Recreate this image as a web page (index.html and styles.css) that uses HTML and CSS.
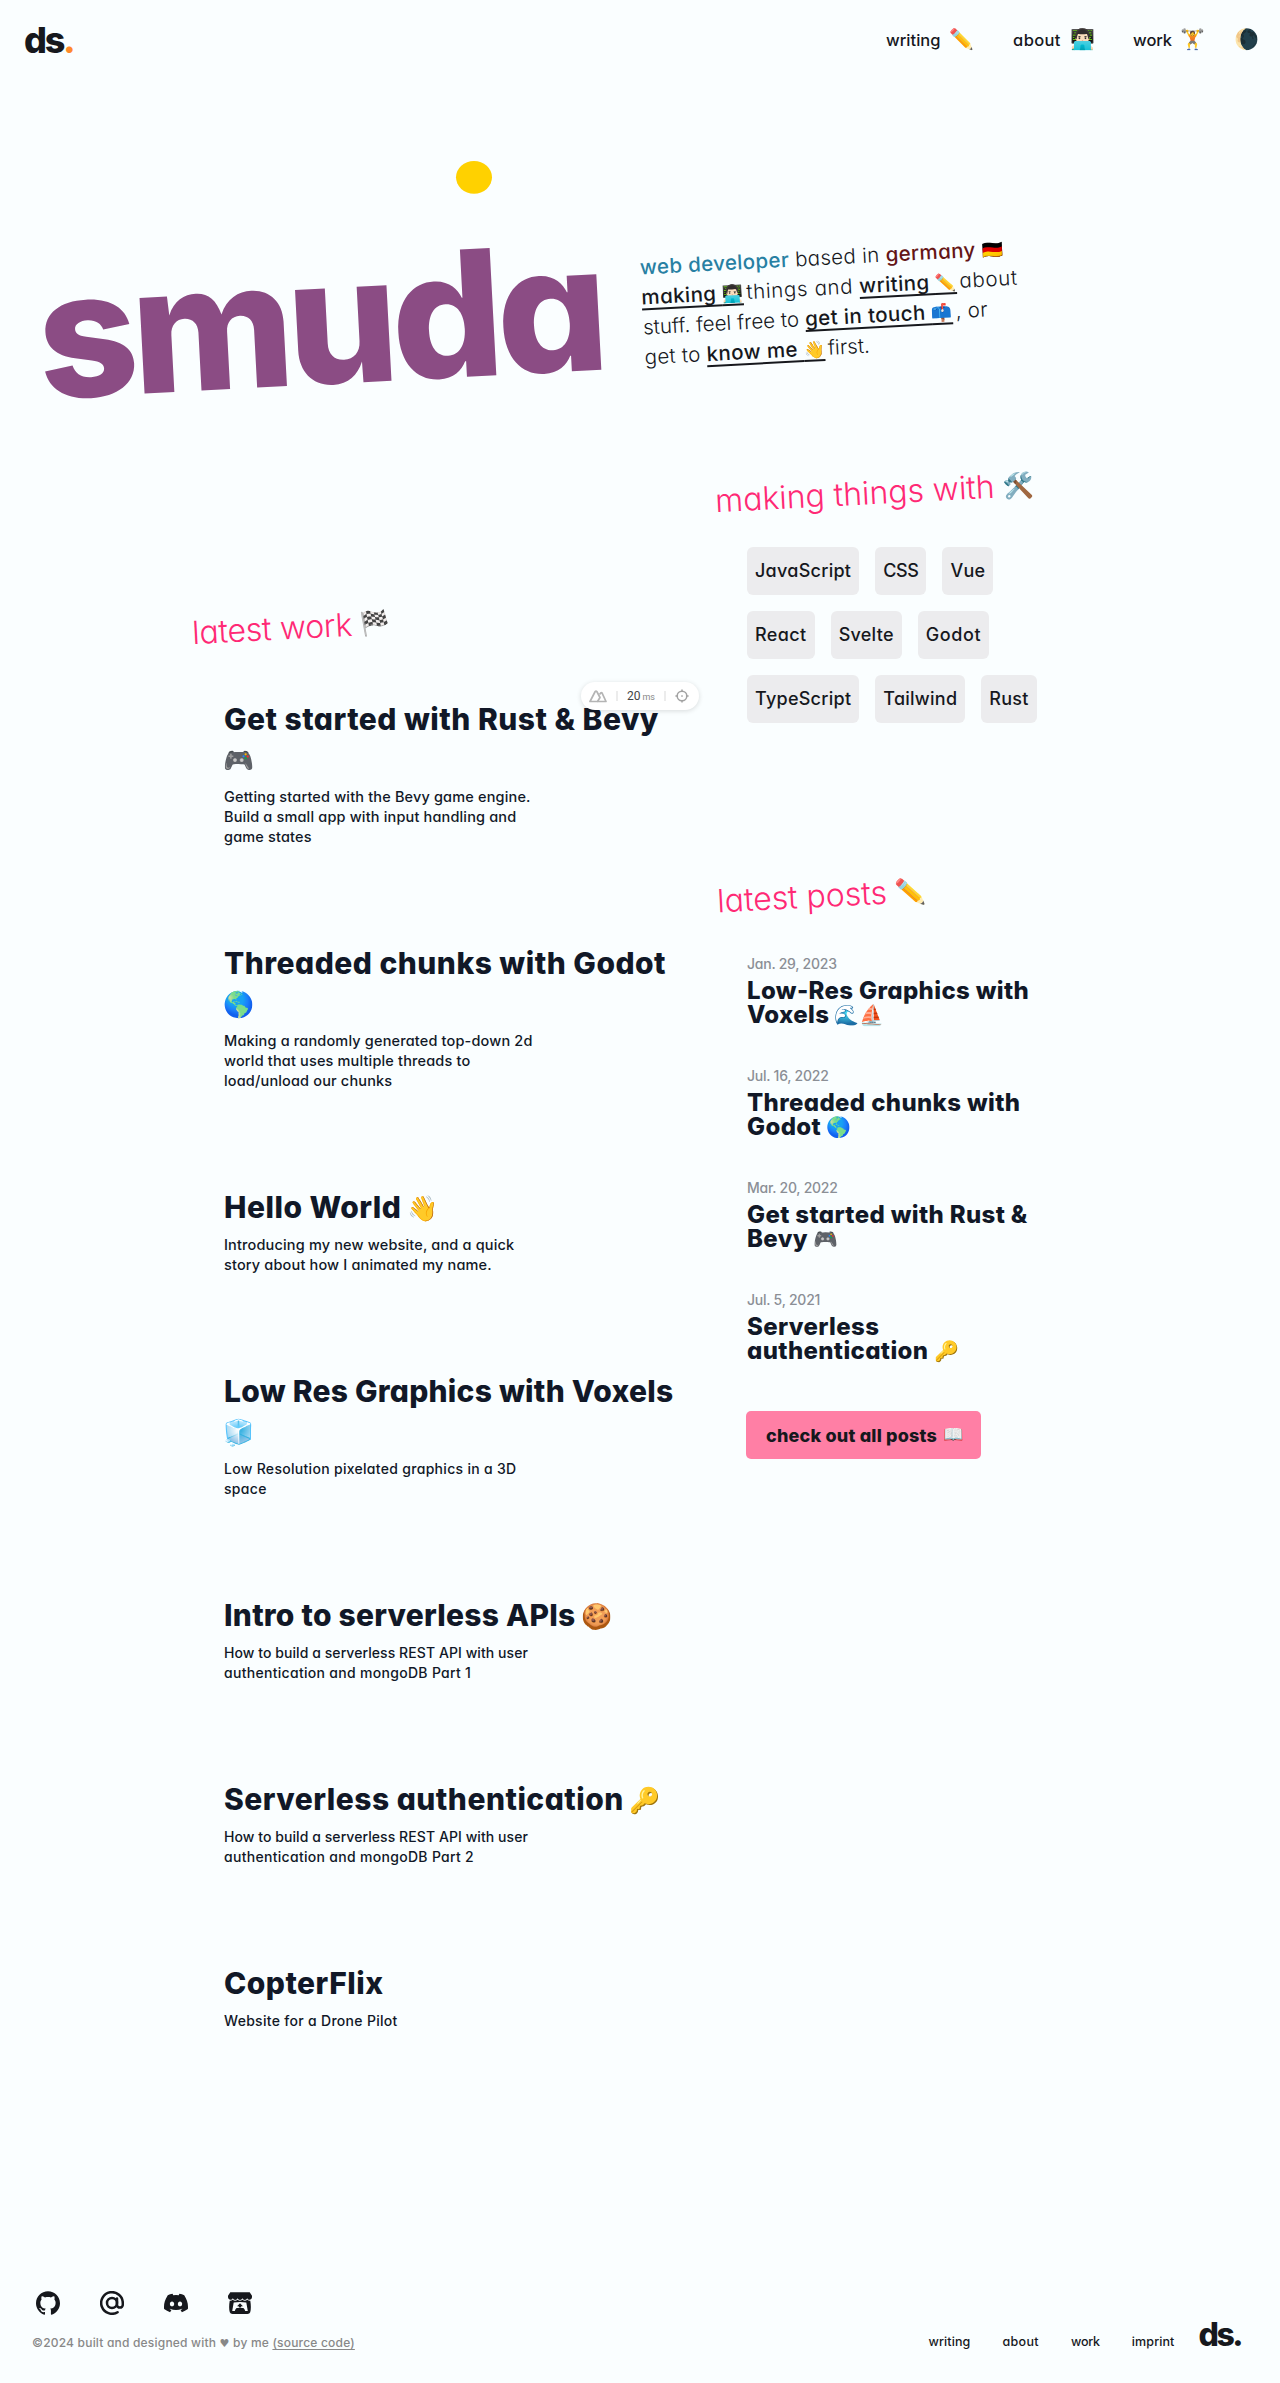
FILE: index.html
```
<!DOCTYPE html>
<html lang="en">
<head>
<meta charset="utf-8">
<title>ds.</title>
<link rel="stylesheet" href="styles.css">
</head>
<body>
<header class="header">
  <a class="logo">ds<span class="logo-dot">.</span></a>
  <nav class="nav">
    <a class="nav-link nav-writing">writing <span class="emoji">✏️</span></a>
    <a class="nav-link nav-about"><span class="wide">about</span> <span class="emoji">👨🏻‍💻</span></a>
    <a class="nav-link nav-work">work <span class="emoji">🏋️</span></a>
    <span class="emoji moon">🌘</span>
  </nav>
</header>

<section class="hero">
  <svg class="wordmark" viewBox="0 0 620 350" width="620" height="350">
    <ellipse cx="474" cy="97.3" rx="18" ry="16.4" fill="#ffd100"/>
    <text class="wordmark-text" transform="translate(41 319) rotate(-3)">smuda</text>
  </svg>
  <div class="intro">
    <div class="line"><b class="blue">web developer</b> based in <b class="red">germany</b> <span class="emoji">🇩🇪</span></div>
    <div class="line"><a>making <span class="emoji">👨🏻‍💻</span></a><span class="after loose">things and</span> <a>writing <span class="emoji">✏️</span></a><span class="after loose">about</span></div>
    <div class="line"><span class="tight">stuff. feel free to</span> <a>get in touch <span class="emoji">📫</span></a><span class="after">, or</span></div>
    <div class="line">get to <a>know me <span class="emoji">👋</span></a><span class="after tight">first.</span></div>
  </div>
</section>

<main class="main">
  <section class="work">
    <h2 class="heading heading-work">latest work <span class="emoji">🏁</span></h2>
    <ul class="work-list">
      <li><h3>Get started with Rust &amp; Bevy<br><span class="emoji">🎮</span></h3><p>Getting started with the Bevy game engine.<br>Build a small app with input handling and<br>game states</p></li>
      <li><h3>Threaded chunks with Godot<br><span class="emoji">🌎</span></h3><p>Making a randomly generated top-down 2d<br>world that uses multiple threads to<br>load/unload our chunks</p></li>
      <li><h3>Hello World <span class="emoji">👋</span></h3><p>Introducing my new website, and a quick<br>story about how I animated my name.</p></li>
      <li><h3 class="snug">Low Res Graphics with Voxels<br><span class="emoji">🧊</span></h3><p class="mid">Low Resolution pixelated graphics in a 3D<br>space</p></li>
      <li><h3 class="snug">Intro to serverless APIs <span class="emoji">🍪</span></h3><p class="snug">How to build a serverless REST API with user<br><span class="mid">authentication and mongoDB Part 1</span></p></li>
      <li><h3>Serverless authentication <span class="emoji">🔑</span></h3><p class="snug">How to build a serverless REST API with user<br><span class="mid">authentication and mongoDB Part 2</span></p></li>
      <li><h3>CopterFlix</h3><p class="mid">Website for a Drone Pilot</p></li>
    </ul>
  </section>

  <section class="side">
    <h2 class="heading heading-making">making things with <span class="emoji">🛠️</span></h2>
    <div class="badges">
      <div class="badge-row"><span>JavaScript</span><span class="css">CSS</span><span>Vue</span></div>
      <div class="badge-row"><span class="react">React</span><span>Svelte</span><span class="godot">Godot</span></div>
      <div class="badge-row"><span>TypeScript</span><span>Tailwind</span><span>Rust</span></div>
    </div>
    <h2 class="heading heading-posts">latest posts <span class="emoji">✏️</span></h2>
    <ul class="posts">
      <li><time>Jan. 29, 2023</time><h3>Low-Res Graphics with<br>Voxels <span class="emoji">🌊⛵</span></h3></li>
      <li><time>Jul. 16, 2022</time><h3>Threaded chunks with<br>Godot <span class="emoji">🌎</span></h3></li>
      <li><time>Mar. 20, 2022</time><h3>Get started with Rust &amp;<br>Bevy <span class="emoji">🎮</span></h3></li>
      <li><time>Jul. 5, 2021</time><h3>Serverless<br>authentication <span class="emoji">🔑</span></h3></li>
    </ul>
    <a class="button">check out all posts <span class="emoji">📖</span></a>
  </section>
</main>

<footer class="footer">
  <div>
    <div class="social">
      <svg viewBox="0 0 24 24"><path fill="currentColor" d="M12 .297c-6.63 0-12 5.373-12 12 0 5.303 3.438 9.8 8.205 11.385.6.113.82-.258.82-.577 0-.285-.01-1.04-.015-2.04-3.338.724-4.042-1.61-4.042-1.61C4.422 18.07 3.633 17.7 3.633 17.7c-1.087-.744.084-.729.084-.729 1.205.084 1.838 1.236 1.838 1.236 1.07 1.835 2.809 1.305 3.495.998.108-.776.417-1.305.76-1.605-2.665-.3-5.466-1.332-5.466-5.93 0-1.31.465-2.38 1.235-3.22-.135-.303-.54-1.523.105-3.176 0 0 1.005-.322 3.3 1.23.96-.267 1.98-.399 3-.405 1.02.006 2.04.138 3 .405 2.28-1.552 3.285-1.23 3.285-1.23.645 1.653.24 2.873.12 3.176.765.84 1.23 1.91 1.23 3.22 0 4.61-2.805 5.625-5.475 5.92.42.36.81 1.096.81 2.22 0 1.606-.015 2.896-.015 3.286 0 .315.21.69.825.57C20.565 22.092 24 17.592 24 12.297c0-6.627-5.373-12-12-12"/></svg>
      <svg viewBox="0 0 24 24" fill="none" stroke="currentColor" stroke-width="2.5" stroke-linecap="round"><circle cx="12" cy="12" r="5"/><path d="M17 7.5V13.7a2.9 2.9 0 0 0 5.8 0V12A10.8 10.8 0 1 0 17.6 21.2"/></svg>
      <svg viewBox="0 0 24 24"><path fill="currentColor" d="M20.317 4.37a19.79 19.79 0 0 0-4.885-1.515.074.074 0 0 0-.079.037c-.21.375-.444.864-.608 1.25a18.27 18.27 0 0 0-5.487 0 12.64 12.64 0 0 0-.617-1.25.077.077 0 0 0-.079-.037A19.736 19.736 0 0 0 3.677 4.37a.07.07 0 0 0-.032.027C.533 9.046-.32 13.58.099 18.057a.082.082 0 0 0 .031.057 19.9 19.9 0 0 0 5.993 3.03.078.078 0 0 0 .084-.028 14.09 14.09 0 0 0 1.226-1.994.076.076 0 0 0-.041-.106 13.107 13.107 0 0 1-1.872-.892.077.077 0 0 1-.008-.128c.126-.094.252-.192.372-.292a.074.074 0 0 1 .077-.01c3.928 1.793 8.18 1.793 12.062 0a.074.074 0 0 1 .078.01c.12.098.246.198.373.292a.077.077 0 0 1-.006.127 12.299 12.299 0 0 1-1.873.892.077.077 0 0 0-.041.107c.36.698.772 1.362 1.225 1.993a.076.076 0 0 0 .084.028 19.839 19.839 0 0 0 6.002-3.03.077.077 0 0 0 .032-.054c.5-5.177-.838-9.674-3.549-13.66a.061.061 0 0 0-.031-.03zM8.02 15.33c-1.183 0-2.157-1.085-2.157-2.419 0-1.333.956-2.419 2.157-2.419 1.21 0 2.176 1.096 2.157 2.42 0 1.333-.956 2.418-2.157 2.418zm7.975 0c-1.183 0-2.157-1.085-2.157-2.419 0-1.333.955-2.419 2.157-2.419 1.21 0 2.176 1.096 2.157 2.42 0 1.333-.946 2.418-2.157 2.418z"/></svg>
      <svg viewBox="0 0 24 24" fill="currentColor"><path d="M2.3 1.2h19.4L24 4.7v1.6a2.5 2.5 0 0 1-4.8 1 2.6 2.6 0 0 1-4.8 0 2.6 2.6 0 0 1-4.8 0 2.6 2.6 0 0 1-4.8 0A2.5 2.5 0 0 1 0 6.3V4.7z"/><path fill-rule="evenodd" d="M1.7 9.800q1.700.2 3-1.100 2.400 2 4.900 0 2.400 2 4.800 0 2.500 2 4.900 0 1.300 1.300 3 1.100 1.200 7.400-.1 11.400-.6 1.700-2.700 1.700H4.500q-2.100 0-2.700-1.700-1.300-4-.1-11.400M5.700 11.400 4.200 20h2.600q.5-2.200 1.800-3h6.800q1.300.8 1.800 3h2.600l-1.500-8.600q-6.300-.6-12.600 0"/><path d="m12 12.200 3 3h-1.800V16.500h-2.400v-1.300H9z"/></svg>
    </div>
    <p class="copyright">©2024 built and designed with <span class="heart">♥</span> by me <a>(source code)</a></p>
  </div>
  <nav class="footer-nav">
    <a>writing</a><a class="wide">about</a><a class="work-link">work</a><a>imprint</a><a class="logo footer-logo">ds.</a>
  </nav>
</footer>

<div class="metrics">
  <svg width="18" height="14" viewBox="0 0 18 14" fill="none" stroke="#b4b4b4" stroke-width="1.7" stroke-linejoin="round"><path d="M1 12.500 6.200 2.500q.8-1 1.600 0l3.200 6-2.500 4z"/><path d="m10.500 5.500 1.200-1.600q.7-.6 1.300 0l4 8.600H8.500"/></svg>
  <i></i><span class="ms">20 <small>ms</small></span><i></i>
  <svg width="14" height="14" viewBox="0 0 16 16" fill="none" stroke="#a2a2a2" stroke-width="1.700"><circle cx="8" cy="8" r="5.500"/><path d="M8 .5v3M8 12.500v3M.5 8h3M12.500 8h3"/><circle cx="8" cy="8" r=".7" fill="#a2a2a2" stroke-width=".6"/></svg>
</div>
</body>
</html>
```
FILE: styles.css
```
* { box-sizing: border-box; }
body {
  margin: 0;
  min-height: 2383px;
  display: flex;
  flex-direction: column;
  position: relative;
  background: #fafeff;
  color: #16181d;
  font-family: Inter, "Open Sans", sans-serif;
  font-feature-settings: "cv11";
}
h2, h3, p, ul { margin: 0; padding: 0; }
li { list-style: none; }
.emoji {
  font-family: "Noto Color Emoji", sans-serif;
  font-weight: 400;
  letter-spacing: 0;
  line-height: 1;
}

.header {
  height: 80px;
  padding: 0 21px 0 24px;
  display: flex;
  justify-content: space-between;
  align-items: center;
}
.logo {
  font-size: 36px;
  font-weight: 800;
  line-height: 40px;
  letter-spacing: -2.300px;
}
.logo-dot { color: #ff8a2b; }
.nav { display: flex; align-items: center; }
.nav-link {
  display: flex;
  align-items: center;
  justify-content: space-between;
  height: 24px;
  font-size: 16.500px;
  font-weight: 500;
}
.wide { letter-spacing: .35px; }
.nav .emoji { font-size: 20px; line-height: 22px; height: 24px; }
.nav-writing { width: 88px; margin-right: 39px; }
.nav-about { width: 82px; margin-right: 38px; }
.nav-work { width: 72px; margin-right: 29px; letter-spacing: -.1px; }

.hero { display: flex; height: 389px; }
.wordmark { flex: none; overflow: visible; }
.wordmark-text { font-size: 175px; font-weight: 800; letter-spacing: -6.500px; fill: #8b4c84; }
.intro {
  width: 400px;
  height: 120px;
  margin: 162px 0 0 22px;
  font-size: 20.500px;
  font-weight: 300;
  line-height: 30px;
  letter-spacing: .3px;
  transform: rotate(-3deg);
}
.line { white-space: nowrap; }
.intro b, .intro a { font-weight: 500; }
.intro b { letter-spacing: .35px; }
.intro a {
  letter-spacing: .4px;
  text-decoration: underline;
  text-decoration-thickness: 1.500px;
  text-underline-offset: 4px;
}
.intro .emoji { font-size: 17px; line-height: 20px; }
.blue { color: #2780a3; }
.red { color: #641516; }
.after { margin-left: 3px; }
.intro .loose { letter-spacing: .65px; }
.intro .tight { letter-spacing: .05px; }

.main {
  flex: 1;
  display: grid;
  grid-template-columns: 523px 1fr;
  padding-left: 192px;
}
.work { padding-top: 135px; }
.heading {
  width: max-content;
  height: 48px;
  display: flex;
  align-items: center;
  gap: 8px;
  font-size: 32px;
  font-weight: 300;
  line-height: 48px;
  letter-spacing: -.02px;
  color: #ff2975;
  transform: rotate(-3deg);
}
.heading .emoji { font-size: 25px; }
.heading-work { letter-spacing: -.25px; }
.heading-work .emoji { font-size: 24px; }

.work-list {
  display: flex;
  flex-direction: column;
  gap: 96px;
  margin: 47px 0 0 32px;
  width: 480px;
  color: #111827;
}
.work-list h3 {
  height: max-content;
  font-size: 30px;
  font-weight: 800;
  line-height: 40px;
  letter-spacing: .48px;
}
.work-list h3.snug { letter-spacing: .25px; }
.work-list .emoji {
  font-size: 25px;
  line-height: 30px;
  margin-left: -1px;
  vertical-align: 1px;
}
.work-list p {
  margin-top: 8px;
  font-size: 14.500px;
  font-weight: 500;
  line-height: 20px;
  letter-spacing: .16px;
}
.work-list p.snug { font-size: 14px; letter-spacing: .07px; }
.work-list .mid { font-size: 14px; letter-spacing: .3px; }

.badges {
  display: flex;
  flex-direction: column;
  gap: 16px;
  margin: 30px 0 0 32px;
}
.badge-row { display: flex; gap: 16px; }
.badge-row span {
  height: 48px;
  padding: 0 8px;
  border-radius: 6px;
  background: #ececee;
  font-size: 18px;
  font-weight: 500;
  line-height: 48px;
  letter-spacing: .26px;
}
.badge-row .css { letter-spacing: -.4px; }
.badge-row .react { letter-spacing: .4px; }
.badge-row .godot { letter-spacing: .6px; }
.heading-posts { margin: 149px 0 0 2px; }

.posts {
  display: flex;
  flex-direction: column;
  gap: 40px;
  margin: 34px 0 0 32px;
}
.posts time {
  display: block;
  margin-bottom: 5px;
  font-size: 14px;
  font-weight: 500;
  line-height: 20px;
  letter-spacing: -.25px;
  color: #8b8f96;
}
.posts h3 {
  height: 47px;
  font-size: 24px;
  font-weight: 800;
  line-height: 24px;
  letter-spacing: .36px;
  color: #111827;
}
.posts .emoji { font-size: 20px; line-height: 20px; vertical-align: 1px; }
.button {
  display: flex;
  align-items: center;
  gap: 6px;
  width: 235px;
  height: 48px;
  margin: 49px 0 0 31px;
  padding-left: 20px;
  border-radius: 5px;
  background: #ff7fa5;
  font-size: 18px;
  font-weight: 800;
  letter-spacing: .2px;
}
.button .emoji { font-size: 16.500px; }

.footer {
  display: flex;
  justify-content: space-between;
  align-items: flex-end;
  padding: 0 39px 31px 32px;
}
.social { display: flex; gap: 40px; padding-left: 4px; }
.social svg { width: 24px; height: 24px; }
.copyright {
  margin-top: 20px;
  font-size: 12px;
  font-weight: 500;
  line-height: 16px;
  letter-spacing: .2px;
  color: #888;
}
.copyright a { text-decoration: underline; text-underline-offset: 2px; }
.heart { font-family: "DejaVu Sans", sans-serif; font-size: 11px; }
.footer-nav {
  display: flex;
  align-items: baseline;
  gap: 32px;
  font-size: 12.500px;
  font-weight: 500;
  letter-spacing: .1px;
}
.footer-logo { margin-left: -8px; font-size: 32px; line-height: 34px; letter-spacing: -2.500px; }
.footer-nav .work-link { letter-spacing: -.2px; }

.metrics {
  position: absolute;
  left: 581px;
  top: 682px;
  width: 118px;
  height: 28px;
  padding: 0 10px 0 8px;
  display: flex;
  align-items: center;
  justify-content: space-between;
  border-radius: 14px;
  background: #fff;
  box-shadow: 0 1px 5px rgba(0, 0, 0, .14);
}
.metrics i { width: 2px; height: 10px; background: #ececec; }
.ms { font-family: Roboto, sans-serif; font-size: 12px; color: #444; }
.ms small { margin-left: -1px; font-size: 9px; color: #888; }
```
